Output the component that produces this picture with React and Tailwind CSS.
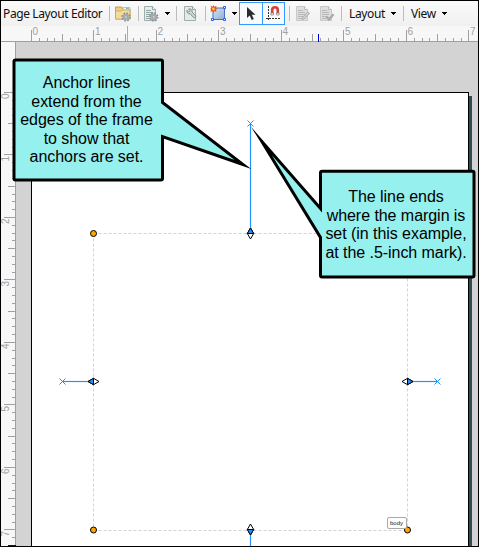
import React from 'react';

const ticks = Array.from({ length: 59 }, (_, i) => i);
const tickLength = (i) => (i % 8 === 0 ? 11 : i % 4 === 0 ? 7 : 3);

function Separator() {
  return <span className="h-[15px] w-px shrink-0 bg-[#bdbdbd]" />;
}

function Caret() {
  return (
    <svg width="5" height="3" className="shrink-0" shapeRendering="crispEdges">
      <path d="M0 0h5v1h-1v1h-1v1h-1v-1h-1v-1h-1z" fill="#000" />
    </svg>
  );
}

function Gear({ x, y }) {
  return (
    <g transform={`translate(${x} ${y})`}>
      <circle r="3.5" fill="#a9adb0" />
      <circle r="3.9" fill="none" stroke="#8d9194" strokeWidth="1.6" strokeDasharray="1.6 1.46" />
      <circle r="1.2" fill="#f4f4f4" stroke="#85898c" strokeWidth=".6" />
    </g>
  );
}

function FolderIcon() {
  return (
    <svg width="18" height="18" className="shrink-0">
      <path d="M1.5 4.5V2h6l1.500 2h7v10H1.500z" fill="#e9cd82" stroke="#c19d4d" />
      <path d="M9 2.500h7V5H9z" fill="#fff6d5" stroke="#c9aa62" strokeWidth=".7" />
      <path d="M12 3.300h3" stroke="#52aee0" />
      <path d="M1.500 6h6l1-1H16v9H1.500z" fill="#f3dc9b" stroke="#c7a75c" strokeWidth=".8" />
      <Gear x={12} y={12} />
    </svg>
  );
}

function PageIcon({ kind }) {
  const disabled = kind === 'edit' || kind === 'check';
  const ink = disabled ? '#b9b9b9' : '#93a5a2';
  return (
    <svg width="16" height="18" className="shrink-0">
      <path d="M1.500 1.500h8l3 3v11h-11z" fill={disabled ? '#dedede' : '#e3ece9'} stroke={disabled ? '#c9c9c9' : '#9eaead'} />
      <path d="M9.500 1.500v3h3" fill="#f6f6f6" stroke={ink} />
      {kind !== 'wrench' && <path d="M3 5.500h5M3 7.500h7M3 9.500h7M3 11.500h5M3 13.500h4" stroke={ink} />}
      {kind === 'gear' && <Gear x={10.8} y={12} />}
      {kind === 'wrench' && (
        <path d="M4 5.200l1.800 1.700 1.400-1.200L5.600 4c2-.7 3.900.8 3.400 3l3.600 3.800c.8 1.400-.8 2.700-2 1.700L7.200 8.900C4.900 9.400 3.200 7.200 4 5.200z" fill="#d0d5d5" stroke="#7e8788" strokeWidth=".9" />
      )}
      {kind === 'edit' && <path d="M7 14.500l.6-2.200 5.400-5.500 1.700 1.600-5.500 5.400z" fill="#cfcfcf" stroke="#aaa" strokeWidth=".9" />}
      {kind === 'check' && <path d="M7.300 11.500l2.700 3 4.500-5.300" fill="none" stroke="#ababab" strokeWidth="2.4" />}
    </svg>
  );
}

function FrameIcon() {
  return (
    <svg width="17" height="17" className="shrink-0">
      <defs>
        <linearGradient id="frameFill" x1="0" y1="0" x2="1" y2="1">
          <stop stopColor="#d5e3f2" />
          <stop offset="1" stopColor="#8eafd3" />
        </linearGradient>
      </defs>
      <path d="M3 3h11.500v11.500H3z" fill="url(#frameFill)" stroke="#4b70b7" />
      <path d="M13.500 1.500h2v2h-2zM13.500 13.500h2v2h-2zM1.500 13.500h2v2h-2z" fill="#fff" stroke="#315be0" />
      <path d="M3.500 0l.9 1.700L6.600.8 5.900 3 7.500 4l-1.700.8.7 2.100-2-.8L3.500 8l-1-1.900-2 .8.7-2.100L0 4l1.400-1L.6.8l2.100.9z" fill="#ed4f1b" />
      <circle cx="3.5" cy="4" r="1.4" fill="#ffc52b" />
    </svg>
  );
}

function Toolbar() {
  return (
    <div className="flex h-[25px] shrink-0 items-center bg-gradient-to-b from-[#fafafa] to-[#f0f0f0] font-['Noto_Sans',sans-serif] text-[12px] leading-none text-[#101010]">
      <span className="ml-[2px] w-[106px] whitespace-nowrap tracking-[-0.38px]">Page Layout Editor</span>
      <Separator />
      <div className="ml-[4px] flex w-[24px]"><FolderIcon /></div>
      <Separator />
      <div className="ml-[4px] flex w-[33px] items-center gap-[6px]"><PageIcon kind="gear" /><Caret /></div>
      <Separator />
      <div className="ml-[6px] flex w-[22px]"><PageIcon kind="wrench" /></div>
      <Separator />
      <div className="ml-[4px] flex w-[29px] items-center gap-[5px]"><FrameIcon /><Caret /></div>
      <div className="flex h-[23px] w-[24px] shrink-0 items-center justify-center border border-[#3399ff] bg-[#f7f9fc]">
        <svg width="12" height="15">
          <path d="M2 1v11l2.700-2.500 2 4.500 2.100-1-2-4.300h3.700z" fill="#2b2b2b" />
        </svg>
      </div>
      <div className="-ml-px flex h-[23px] w-[23px] shrink-0 items-center justify-center border border-[#3399ff] bg-[#f7f9fc]">
        <svg width="17" height="17">
          <path d="M3.500 1v15M1 13.500h14" stroke="#333" strokeDasharray="2 1" shapeRendering="crispEdges" />
          <path d="M7.200 9V5a2.800 2.800 0 0 1 5.600 0v4" fill="none" stroke="#d2413b" strokeWidth="2.6" />
          <path d="M5.900 8h2.600v2H5.900zM11.500 8h2.600v2h-2.600z" fill="#fff" stroke="#777" strokeWidth=".7" />
        </svg>
      </div>
      <span className="w-[4px] shrink-0" />
      <Separator />
      <div className="ml-[5px] flex w-[46px] gap-[8px]"><PageIcon kind="edit" /><PageIcon kind="check" /></div>
      <Separator />
      <div className="ml-[7px] flex w-[54px] items-center justify-between pr-[7px]"><span className="tracking-[-0.35px]">Layout</span><Caret /></div>
      <Separator />
      <div className="ml-[7px] flex w-[36px] items-center justify-between"><span className="tracking-[-0.35px]">View</span><Caret /></div>
    </div>
  );
}

function HorizontalRuler() {
  return (
    <svg width="477" height="16" className="block shrink-0 bg-[#f7f7f7] font-['Liberation_Sans',sans-serif] text-[10px]">
      <path d="M0 15.500h477" stroke="#a0a0a0" />
      <g shapeRendering="crispEdges">
        {ticks.filter((i) => i < 57).map((i) => (
          <rect key={i} x={Math.round(30 + i * 7.81)} y={15 - tickLength(i)} width="1" height={tickLength(i)} fill="#a0a0a0" />
        ))}
        <path d="M126.500 0v15" stroke="#ffa500" />
        <path d="M317.500 8v8" stroke="#0000cd" />
      </g>
      {[0, 1, 2, 3, 4, 5, 6, 7].map((n) => (
        <text key={n} x={31.5 + n * 62.5} y="9" fill="#a0a0a0">{n}</text>
      ))}
    </svg>
  );
}

function VerticalRuler() {
  return (
    <svg width="15" height="504" className="block shrink-0 bg-[#f7f7f7] font-['Liberation_Sans',sans-serif] text-[10px]">
      <path d="M14.500 0v504" stroke="#a0a0a0" />
      <g shapeRendering="crispEdges">
        {ticks.map((i) => (
          <rect key={i} x={14 - tickLength(i)} y={Math.round(50 + i * 7.81)} width={tickLength(i)} height="1" fill="#a0a0a0" />
        ))}
        <path d="M7 503.500h8" stroke="#0000cd" />
      </g>
      {[0, 1, 2, 3, 4, 5, 6, 7].map((n) => (
        <text key={n} transform={`translate(8 ${57 + n * 62.5}) rotate(-90)`} fill="#a0a0a0">{n}</text>
      ))}
    </svg>
  );
}

function Anchor({ x, y, angle, length }) {
  return (
    <g transform={`translate(${x} ${y}) rotate(${angle})`}>
      <path d={`M0 -3V-${length}`} stroke="#1e90ff" strokeWidth="1.15" />
      <path d={`M-3 ${-length - 3}l6 6m0 -6l-6 6`} stroke="#1e90ff" />
      <path d="M0 -5.500L3.200 0L0 5.500L-3.200 0Z" fill="#fff" stroke="#000" />
      <path d="M0 -5.500L3.200 0H-3.200Z" fill="#1e90ff" stroke="#000" />
    </g>
  );
}

function Canvas() {
  return (
    <div className="relative h-[504px] w-[462px] shrink-0 overflow-hidden bg-[#d3d3d3]">
      <div className="absolute top-[54px] left-[18px] h-[460px] w-[438px] bg-[#2f4f4f]" />
      <div className="absolute top-[50px] left-[15px] h-[470px] w-[438px] border border-black bg-white" />
      <svg viewBox="16 42 462 504" width="462" height="504" className="absolute inset-0" fill="none">
        <path d="M93.500 233.500H407.500M93.500 530.500H407.500M93.500 233.500V530.500M407.500 233.500V530.500" stroke="#d3d3d3" strokeDasharray="3 2" />
        <Anchor x={250.5} y={233.5} angle={0} length={110} />
        <Anchor x={93.5} y={381.5} angle={-90} length={31} />
        <Anchor x={407.5} y={381.5} angle={90} length={30} />
        <Anchor x={250.5} y={529.5} angle={180} length={40} />
        {[[93.5, 233.5], [93.5, 530], [407.5, 530]].map(([cx, cy]) => (
          <circle key={`${cx}-${cy}`} cx={cx} cy={cy} r="3" fill="#ffa500" stroke="#000" />
        ))}
      </svg>
      <div className="absolute top-[475px] left-[371px] flex h-[12px] w-[20px] items-center justify-center rounded-[2px] border border-[#a9a9a9] bg-white pr-px font-['Liberation_Sans',sans-serif] text-[6px] leading-none text-[#222]">
        body
      </div>
    </div>
  );
}

function CalloutText({ lines, className }) {
  return (
    <div className={`absolute flex flex-col items-center font-['Liberation_Sans',sans-serif] text-[16px] leading-[18.5px] tracking-[-0.05px] whitespace-nowrap text-black ${className}`}>
      {lines.map((line) => <span key={line}>{line}</span>)}
    </div>
  );
}

export default function App() {
  return (
    <div className="relative flex h-[547px] w-[479px] flex-col overflow-hidden border border-black">
      <Toolbar />
      <HorizontalRuler />
      <div className="flex">
        <VerticalRuler />
        <Canvas />
      </div>
      <svg viewBox="1 1 477 545" width="477" height="545" className="absolute inset-0" fill="#96f0ee" stroke="#000" strokeWidth="3" strokeLinejoin="miter" strokeMiterlimit="20">
        <path d="M15.500 60H161Q162.500 60 162.500 61.500V102.500L243 164.500L162.500 136.500V178.500Q162.500 180 161 180H15.500Q14 180 14 178.500V61.500Q14 60 15.500 60Z" />
        <path d="M322 171.200H472.500Q474 171.200 474 172.700V275.500Q474 277 472.500 277H322Q320.500 277 320.500 275.500V237.500L261.500 141L320.500 208.500V172.700Q320.500 171.200 322 171.200Z" />
      </svg>
      <CalloutText className="top-[73px] left-[12px] w-[147px]" lines={['Anchor lines', 'extend from the', 'edges of the frame', 'to show that', 'anchors are set.']} />
      <CalloutText className="top-[187px] left-[319px] w-[152px]" lines={['The line ends', 'where the margin is', 'set (in this example,', 'at the .5-inch mark).']} />
    </div>
  );
}
